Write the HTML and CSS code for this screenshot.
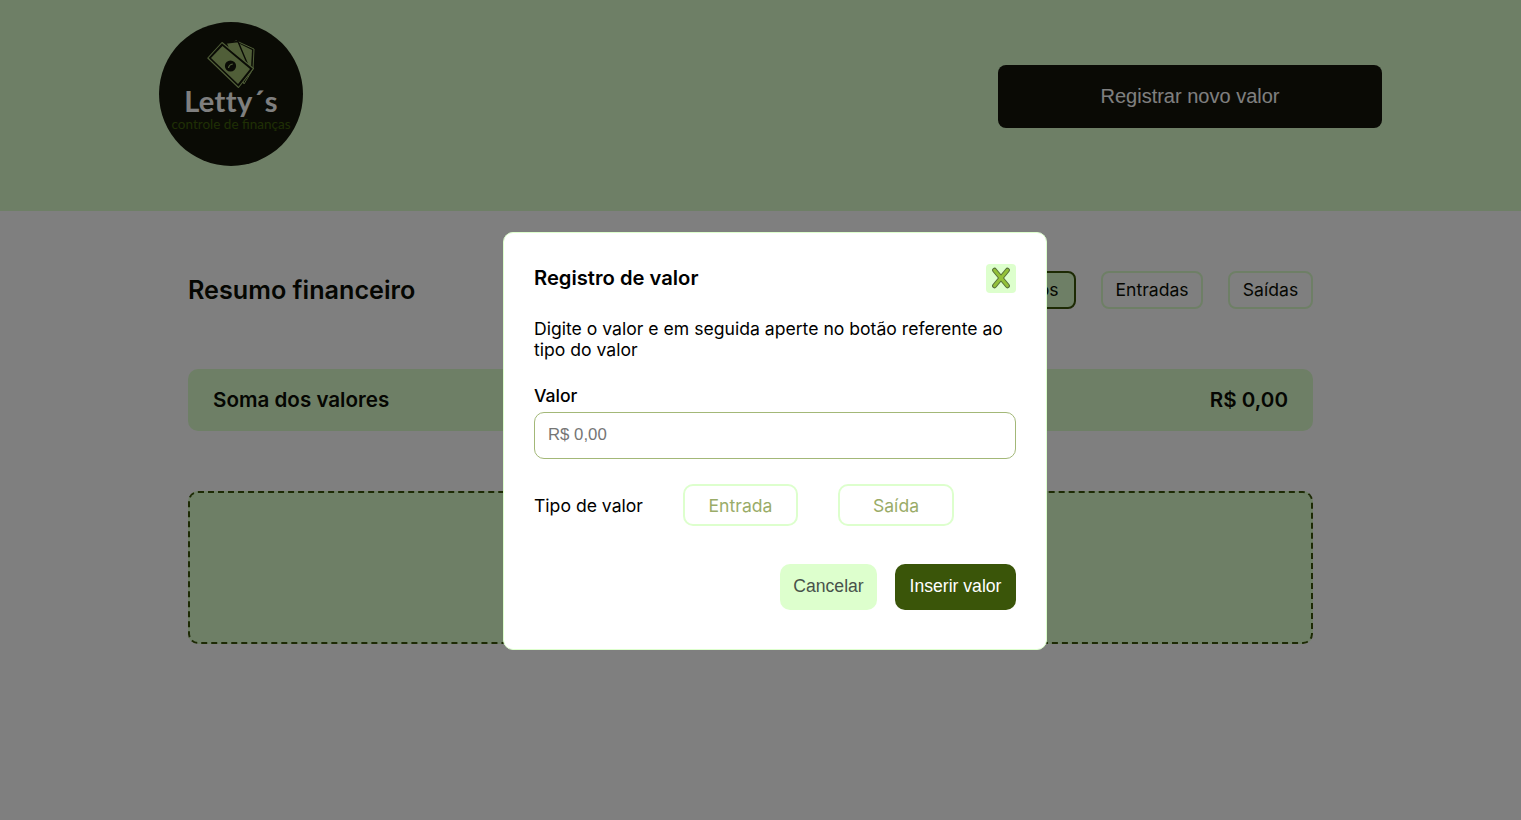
FILE: index.html
```html
<!DOCTYPE html>
<html lang="pt-BR">
<head>
    <meta charset="UTF-8">
    <meta name="viewport" content="width=device-width, initial-scale=1.0">
    <title>Letty's - Controle de finanças</title>
    <link rel="stylesheet" href="styles.css">
</head>
<body>
    <header class="topo">
        <div class="logo">
            <svg class="logo-notas" viewBox="0 0 48 48" width="48" height="48" aria-hidden="true">
                <path d="M29 0.8 L47 9 L46 29 L37 44 L22 6 Z" fill="#14170a" stroke="#a0bd70" stroke-width="1" stroke-linejoin="round"/>
                <path d="M31 3 L45 10 L44 28 L36 39 Z" fill="#a0bd70"/>
                <path d="M19 3 L31 1.5 L43 30 L36 41 Z" fill="#a0bd70" stroke="#14170a" stroke-width="1.4" stroke-linejoin="round"/>
                <path d="M0.8 18 L15 2.5 L46.5 28.5 L31.5 47.5 Z" fill="#14170a" stroke="#a0bd70" stroke-width="1.1" stroke-linejoin="round"/>
                <path d="M4 18 L15.5 6 L43 29 L31 44 Z" fill="#a0bd70"/>
                <circle cx="23.5" cy="26" r="5.6" fill="#14170a"/>
                <path d="M21.5 28 Q22 24.5 25.8 24" fill="none" stroke="#a0bd70" stroke-width="1.2"/>
            </svg>
            <span class="logo-nome">Letty´s</span>
            <span class="logo-sub">controle de finanças</span>
        </div>
        <button class="btn-registrar">Registrar novo valor</button>
    </header>

    <main class="conteudo">
        <div class="resumo-topo">
            <h1>Resumo financeiro</h1>
            <div class="filtros">
                <button class="filtro ativo">Todos</button>
                <button class="filtro filtro-entradas">Entradas</button>
                <button class="filtro filtro-saidas">Saídas</button>
            </div>
        </div>
        <div class="soma">
            <span>Soma dos valores</span>
            <span>R$ 0,00</span>
        </div>
        <div class="vazio"></div>
    </main>

    <div class="overlay">
        <div class="modal">
            <div class="modal-topo">
                <h2>Registro de valor</h2>
                <button class="fechar" aria-label="Fechar">
                    <svg viewBox="0 0 24 24" width="22" height="22" aria-hidden="true">
                        <path d="M5 3.5 L19 20.5 M19 3.5 L5 20.5" fill="none" stroke="#56703a" stroke-width="5.4" stroke-linecap="round"/>
                        <path d="M5 3.5 L19 20.5 M19 3.5 L5 20.5" fill="none" stroke="#93c13a" stroke-width="3.2" stroke-linecap="round"/>
                    </svg>
                </button>
            </div>
            <p class="modal-texto">Digite o valor e em seguida aperte no botão referente ao tipo do valor</p>
            <label class="campo-label" for="valor">Valor</label>
            <input class="campo" id="valor" type="text" placeholder="R$ 0,00">
            <div class="tipo">
                <span class="tipo-label">Tipo de valor</span>
                <button class="tipo-btn btn-entrada">Entrada</button>
                <button class="tipo-btn btn-saida">Saída</button>
            </div>
            <div class="acoes">
                <button class="btn-cancelar">Cancelar</button>
                <button class="btn-inserir">Inserir valor</button>
            </div>
        </div>
    </div>
</body>
</html>
```

FILE: styles.css
```css
* {
    box-sizing: border-box;
}
body {
    margin: 0;
    min-height: 820px;
    background-color: #fff;
    font-family: Inter, "Liberation Sans", sans-serif;
    color: #000;
    overflow: hidden;
}
button {
    font-family: Inter, "Liberation Sans", sans-serif;
    cursor: pointer;
}
.topo {
    height: 211px;
    padding: 22px 139px 0 159px;
    background-color: #ddffcd;
    display: flex;
    justify-content: space-between;
    align-items: flex-start;
}
.logo {
    width: 144px;
    height: 144px;
    border-radius: 50%;
    background-color: #14170a;
    display: flex;
    flex-direction: column;
    align-items: center;
    padding-top: 18px;
}
.logo-notas {
    flex: none;
}
.logo-nome {
    font-family: Lato, sans-serif;
    font-weight: 700;
    font-size: 29px;
    line-height: 26px;
    letter-spacing: 0.4px;
    color: #fff;
}
.logo-sub {
    margin-top: 3px;
    font-family: Lato, sans-serif;
    font-size: 13.5px;
    line-height: 14px;
    color: #3f5f0a;
    white-space: nowrap;
}
.btn-registrar {
    width: 384px;
    height: 63px;
    margin-top: 43px;
    border: 0;
    border-radius: 8px;
    background-color: #14140a;
    color: #fff;
    font-family: "Liberation Sans", sans-serif;
    font-size: 20px;
}
.conteudo {
    width: 1125px;
    margin-left: 188px;
    padding-top: 60px;
}
.resumo-topo {
    display: flex;
    justify-content: space-between;
    align-items: center;
    height: 38px;
}
h1 {
    margin: 0;
    font-size: 25.2px;
    font-weight: 600;
    color: #0a0d04;
}
.filtros {
    display: flex;
    gap: 25px;
}
.filtro {
    height: 38px;
    padding: 0 0 1px;
    border: 2px solid #ddffcd;
    border-radius: 8px;
    background-color: #fff;
    color: #0a0d04;
    font-size: 17.6px;
}
.filtro.ativo {
    width: 86px;
    border-color: #3a5509;
    background-color: #ddffcd;
}
.filtro-entradas {
    width: 102px;
}
.filtro-saidas {
    width: 85px;
}
.soma {
    height: 62px;
    margin-top: 60px;
    padding: 0 25px 1px;
    border-radius: 10px;
    background-color: #ddffcd;
    display: flex;
    justify-content: space-between;
    align-items: center;
    font-size: 20.6px;
    font-weight: 600;
    color: #0a0d04;
}
.vazio {
    height: 153px;
    margin-top: 60px;
    border: 2px dashed #3a5509;
    border-radius: 10px;
    background-color: #ddffcd;
}
.overlay {
    position: fixed;
    inset: 0;
    background-color: rgba(0, 0, 0, 0.5);
}
.modal {
    position: absolute;
    left: 503px;
    top: 232px;
    width: 544px;
    height: 418px;
    padding: 30px 30px 0;
    border: 1px solid #ddffcd;
    border-radius: 10px;
    background-color: #fff;
}
.modal-topo {
    display: flex;
    justify-content: space-between;
    align-items: center;
    height: 30px;
}
h2 {
    margin: 0 0 2px;
    font-size: 20.2px;
    font-weight: 600;
}
.fechar {
    width: 30px;
    height: 29px;
    padding: 0;
    border: 0;
    border-radius: 4px;
    background-color: #ddffcd;
    display: flex;
    align-items: center;
    justify-content: center;
}
.modal-texto {
    margin: 25px 0 0;
    font-size: 17.6px;
    line-height: 21px;
}
.campo-label {
    display: block;
    margin-top: 25px;
    font-size: 17.6px;
    font-weight: 500;
    line-height: 22px;
}
.campo {
    display: block;
    width: 482px;
    height: 47px;
    margin-top: 5px;
    padding: 0 13px 2px;
    border: 1px solid #a3b878;
    border-radius: 10px;
    font-family: "Liberation Sans", sans-serif;
    font-size: 16.8px;
}
.campo::placeholder {
    color: #757575;
}
.tipo {
    display: flex;
    align-items: center;
    margin-top: 25px;
    height: 42px;
}
.tipo-label {
    width: 149px;
    font-size: 17.6px;
}
.tipo-btn {
    height: 42px;
    border: 2px solid #ddffcd;
    border-radius: 10px;
    background-color: #fff;
    color: #9aac68;
    font-size: 17.6px;
}
.btn-entrada {
    width: 115px;
}
.btn-saida {
    width: 116px;
    margin-left: 40px;
}
.acoes {
    display: flex;
    justify-content: flex-end;
    gap: 18px;
    margin-top: 38px;
}
.btn-cancelar,
.btn-inserir {
    height: 46px;
    padding: 0 0 2px;
    border: 0;
    border-radius: 10px;
    font-family: "Liberation Sans", sans-serif;
    font-size: 17.6px;
}
.btn-cancelar {
    width: 97px;
    background-color: #ddffcd;
    color: #48524a;
}
.btn-inserir {
    width: 121px;
    background-color: #3a5509;
    color: #fff;
}
```
